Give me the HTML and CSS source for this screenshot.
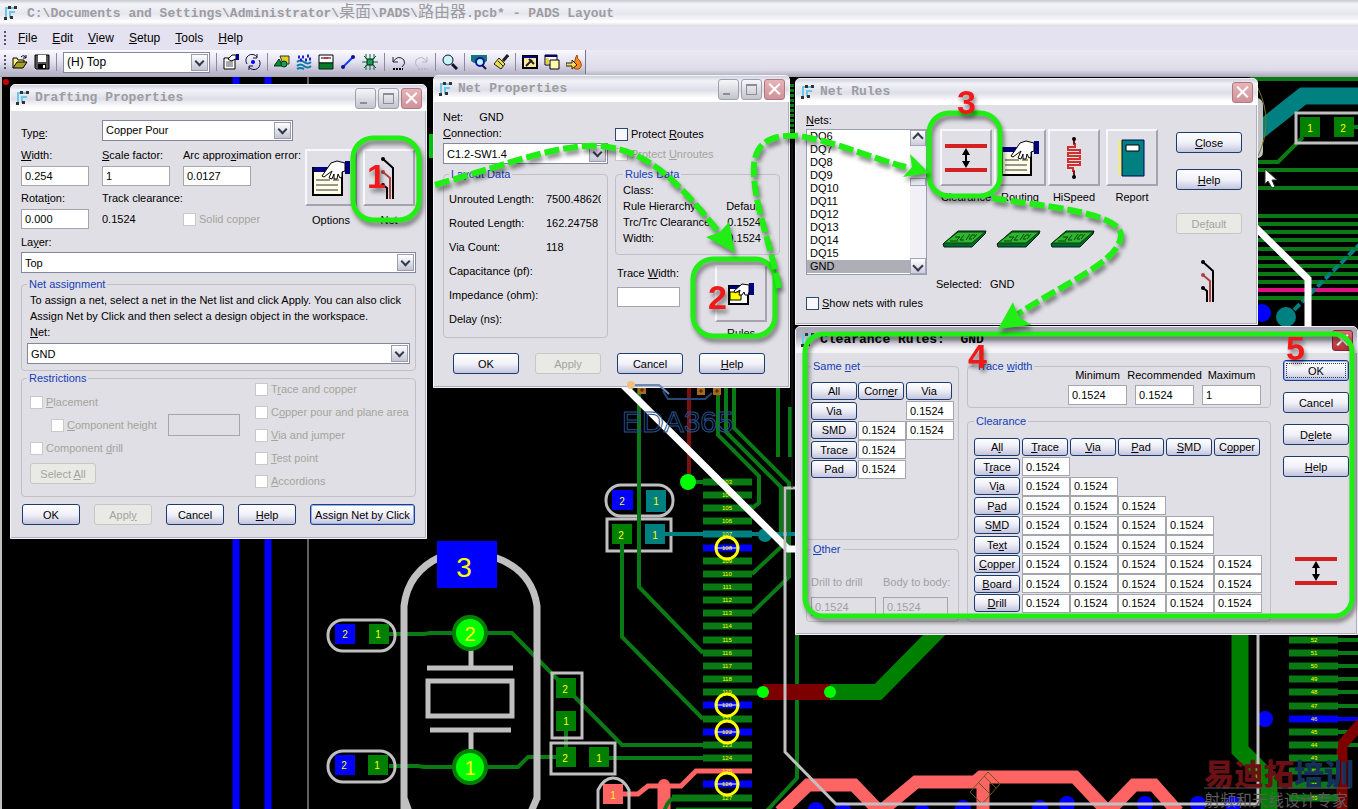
FILE: index.html
```html
<!DOCTYPE html>
<html lang="en">
<head>
  <meta charset="UTF-8">
  <title>PADS Layout</title>
  <link rel="stylesheet" href="styles.css">
</head>
<body>
<svg class="defs" aria-hidden="true">
  <defs>
    <symbol id="i-app" viewBox="0 0 16 16">
      <path d="M3 13V3h9M7 13V7h5" fill="none" stroke="#6cc6e8" stroke-width="2"/>
      <path d="M5 1h3v3H5zM11 1h3v3h-3zM1 12h3v3H1zM7 11h3v3H7z" fill="#333"/>
    </symbol>
    <symbol id="i-hand" viewBox="0 0 38 36">
      <path d="M1 8h29v27H1z" fill="#fffde8" stroke="#000" stroke-width="2"/>
      <path d="M2 7h14v5H2z" fill="#000080"/>
      <path d="M4 20h14M21 20h6M4 25h22M4 30h22" stroke="#333"/>
      <path d="M33 1h5v13h-5z" fill="#000080"/>
      <path d="M33 3l-8-2-6 2-9 13 2 1 8-6-3 7 3 1 2-5 0 5 3 0 1-5 2 4 2-1v-5l3-1z" fill="#fff" stroke="#000"/>
    </symbol>
    <symbol id="i-net" viewBox="0 0 16 42">
      <path d="M2 2l10 9v31" fill="none" stroke="#000" stroke-width="2"/>
      <path d="M2 15l7 6v21" fill="none" stroke="#b04040" stroke-width="2"/>
      <path d="M2 28l4 3v11" fill="none" stroke="#000" stroke-width="2"/>
      <circle cx="2" cy="2" r="2"/><circle cx="2" cy="15" r="2" fill="#b04040"/><circle cx="2" cy="28" r="2"/>
    </symbol>
    <symbol id="i-clear" viewBox="0 0 42 28">
      <path d="M0 2h42M0 26h42" stroke="#d42020" stroke-width="4"/>
      <path d="M21 8v12" stroke="#000" stroke-width="2"/>
      <path d="M21 4l-4 7h8zM21 24l-4-7h8z"/>
    </symbol>
    <symbol id="i-speed" viewBox="0 0 16 42">
      <path d="M8 2v5h1v3H2v3h12v3H2v3h12v3H2v3h12v3H2v3h5v3h1M8 33v7" fill="none" stroke="#d03030" stroke-width="2"/>
      <path d="M8 2v5M8 34v6" stroke="#000"/>
      <circle cx="8" cy="2" r="2"/><circle cx="8" cy="40" r="2"/>
    </symbol>
    <symbol id="i-book" viewBox="0 0 26 38">
      <path d="M3 1h22v36H3z" fill="#008080" stroke="#000060"/>
      <path d="M1 2v34" stroke="#ff0" stroke-width="2" stroke-dasharray="3 1"/>
      <path d="M7 6h13v6H7z" fill="#fff" stroke="#000"/>
    </symbol>
    <symbol id="i-board" viewBox="0 0 45 18">
      <path d="M1 14L16 1h28l-1 3-13 13H2z" fill="#063" stroke="#021"/>
      <path d="M2 13L16 2h27L30 13z" fill="#2fb52f" stroke="#064006"/>
      <path d="M13 7h5l-3 3M22 5l-4 5h4M28 4l-4 6M33 5h-3l-3 4h3M8 11h8M35 4l-4 5" fill="none" stroke="#064006"/>
    </symbol>
    <symbol id="i-rules" viewBox="0 0 26 22">
      <path d="M1 3h19v18H1z" fill="#fff" stroke="#000" stroke-width="2"/>
      <path d="M2 9h11v8H2z" fill="#ff0" stroke="#000"/>
      <path d="M2 3h8v3H2z" fill="#000080"/>
      <path d="M21 0h5v12h-5z" fill="#000080"/>
      <path d="M21 2l-7-1-8 7 1 2 5-3-1 5 3 0 2-3 1 3 3 0 1-3z" fill="#fff" stroke="#000"/>
    </symbol>
  </defs>
</svg>

<div class="app">
  <header class="app-title">
    <svg class="ico"><use href="#i-app"/></svg>
    <span>C:\Documents and Settings\Administrator\<span class="cjk">桌面</span>\PADS\<span class="cjk">路由器</span>.pcb* - PADS Layout</span>
  </header>

  <nav class="menubar">
    <span class="grip"></span>
    <a href="#"><u>F</u>ile</a>
    <a href="#"><u>E</u>dit</a>
    <a href="#"><u>V</u>iew</a>
    <a href="#"><u>S</u>etup</a>
    <a href="#"><u>T</u>ools</a>
    <a href="#"><u>H</u>elp</a>
  </nav>

  <div class="toolbar-row">
    <div class="toolbar">
      <span class="grip"></span>
      <button aria-label="Open"><svg class="ico" viewBox="0 0 16 16"><path d="M1 14V4h4l1 2h6v3" fill="#ffef80" stroke="#000"/><path d="M1 14l4-6h10l-4 6z" fill="#a8a020" stroke="#000"/><path d="M9 3q3-3 5 1m0-3v3h-3" fill="none" stroke="#000"/></svg></button>
      <button aria-label="Save"><svg class="ico" viewBox="0 0 16 16"><path d="M1 1h14v14H2l-1-1z" fill="#555" stroke="#000"/><path d="M4 1h8v7H4z" fill="#fff"/><path d="M4 10h8v5H4z"/><path d="M9 11h2v3H9z" fill="#fff"/></svg></button>
      <span class="sep"></span>
      <span class="combo combo-layer"><select aria-label="Active layer"><option>(H) Top</option></select></span>
      <span class="sep"></span>
      <button aria-label="Properties"><svg class="ico" viewBox="0 0 16 16"><path d="M1 4h11v11H1z" fill="#fff" stroke="#000"/><path d="M3 8h7M3 10h7M3 12h7" stroke="#555"/><path d="M5 5l4-4h4v4L8 7z" fill="#fff" stroke="#000"/><path d="M13 0h3v6h-3z" fill="#000080"/></svg></button>
      <button aria-label="Cycle"><svg class="ico" viewBox="0 0 16 16"><circle cx="8" cy="8" r="2" fill="#00f"/><path d="M2 10a6 6 0 0 1 10-7M14 6a6 6 0 0 1-10 7M12 0v4H8M4 16v-4h4" fill="none" stroke="#114"/></svg></button>
      <span class="sep"></span>
      <button aria-label="Drafting"><svg class="ico" viewBox="0 0 16 16"><path d="M6 2h9v8H9z" fill="#e0d020" stroke="#333"/><path d="M0 12l5-7 4 7z" fill="#0a8a2a" stroke="#032"/><circle cx="10" cy="10" r="3" fill="#17a050" stroke="#032"/></svg></button>
      <button aria-label="Design"><svg class="ico" viewBox="0 0 16 16"><path d="M1 8q3-3 7 0t7 0M1 12q3-3 7 0t7 0M1 15q3-2 7 0" fill="none" stroke="#0a7aa8" stroke-width="2"/><path d="M2 3h2M6 3h2M11 2h2M4 6h2M9 6h2M13 5h2" stroke="#22c" stroke-width="3"/></svg></button>
      <button aria-label="Dimensioning"><svg class="ico" viewBox="0 0 16 16"><path d="M1 1h14v8H1z" fill="#fff" stroke="#000"/><path d="M3 4h10" stroke="#000"/><path d="M6 3h4v2H6z" fill="#c33"/><path d="M1 9h14v6H1z" fill="#0a7a2a" stroke="#021"/></svg></button>
      <button aria-label="ECO"><svg class="ico" viewBox="0 0 16 16"><path d="M3 13L13 3" stroke="#1040ff" stroke-width="2"/><circle cx="3" cy="13" r="2" fill="#118"/><circle cx="13" cy="3" r="2" fill="#118"/></svg></button>
      <button aria-label="BGA"><svg class="ico" viewBox="0 0 16 16"><path d="M8 0v16M0 8h16M2 2l12 12M14 2L2 14M4 0v5M12 0v5M4 11v5M12 11v5" stroke="#063"/><path d="M5 5h6v6H5z" fill="#1a9a5a" stroke="#021"/></svg></button>
      <span class="sep"></span>
      <button aria-label="Undo"><svg class="ico" viewBox="0 0 16 16"><path d="M2 3v5h5M2 8q5-8 11-2 2 4-2 7" fill="none" stroke="#223"/><path d="M2 15h10" stroke="#000" stroke-width="2" stroke-dasharray="2 1"/></svg></button>
      <button aria-label="Redo" disabled><svg class="ico" viewBox="0 0 16 16"><path d="M14 3v5H9M14 8Q9 0 3 6q-2 4 2 7" fill="none" stroke="#b5b5bd"/><path d="M5 15h10" stroke="#b5b5bd" stroke-width="2" stroke-dasharray="2 1"/></svg></button>
      <span class="sep"></span>
      <button aria-label="Zoom"><svg class="ico" viewBox="0 0 16 16"><circle cx="6" cy="6" r="5" fill="#c8f4f4" stroke="#113"/><path d="M10 10l5 5" stroke="#113" stroke-width="3"/></svg></button>
      <span class="sep"></span>
      <button aria-label="View board"><svg class="ico" viewBox="0 0 16 16"><path d="M0 1h16v6l-3 2H3L0 7z" fill="#107878"/><circle cx="9" cy="8" r="4" fill="#bff" stroke="#11a" stroke-width="2"/><path d="M11 11l4 4" stroke="#114" stroke-width="2"/></svg></button>
      <button aria-label="Redraw"><svg class="ico" viewBox="0 0 16 16"><path d="M15 1l-5 6" stroke="#222" stroke-width="3"/><path d="M6 4l6 6-4 5-7-5z" fill="#e8dc50" stroke="#222"/><path d="M5 7l5 5" stroke="#222"/></svg></button>
      <span class="sep"></span>
      <button aria-label="Project explorer"><svg class="ico" viewBox="0 0 16 16"><path d="M1 2h14v12H1z" fill="#ffe9a0" stroke="#000" stroke-width="2"/><path d="M1 3h14" stroke="#000080" stroke-width="2"/><path d="M4 12l6-6M7 5l5 5" stroke="#222" stroke-width="2"/></svg></button>
      <button aria-label="Output window"><svg class="ico" viewBox="0 0 16 16"><path d="M1 1h12v10H1z" fill="#fff" stroke="#000"/><path d="M1 2h12" stroke="#000080" stroke-width="2"/><path d="M6 6h9v9H6z" fill="#fffbb0" stroke="#000"/><path d="M2 4h3v6H2z" fill="#e8d040"/></svg></button>
      <button aria-label="Router"><svg class="ico" viewBox="0 0 16 16"><path d="M9 15q-4-4 0-8 0-3 2-6 0 4 3 6 3 5-1 8z" fill="#f58a1e" stroke="#a40"/><path d="M0 9h6V6l5 5-5 4v-3H0z" fill="#ffd850" stroke="#222"/></svg></button>
    </div>
  </div>

  <main class="workspace">
    <svg class="board" viewBox="0 77 1358 732" width="1358" height="732" aria-hidden="true">
      <!-- left side -->
      <path class="blue" d="M236 77V809M268 77V809" stroke-width="7"/>
      <path class="silk" d="M308 77V809" stroke-width="1"/>
      <path class="silk" d="M1 77V809" stroke-width="2"/>
      <circle cx="6" cy="82" r="3" fill="#c00"/>
      <path d="M431 134v24" stroke="#00c010" stroke-width="4"/>

      <!-- crystal -->
      <path class="green" d="M389 634H424L430 633H512L622 745H703M389 766H418L424 767H518L528 757H556M566 725V750M609 758H703"/>
      <path class="silk" d="M404 809V800L404 606Q408 572 440 557M494 557Q532 570 537 606V800M404 798L409 812M537 798L531 812" stroke-width="7"/>
      <path d="M437 541h60v47h-60z" fill="#00f"/>
      <text class="pin-big" x="464" y="577">3</text>
      <path class="silk" d="M471 650V668M471 730V750M427 668H513M430 730H511" stroke-width="5"/>
      <path class="silk" d="M428 681H512V716H428z" stroke-width="5"/>
      <circle cx="470" cy="633" r="16" fill="#0f0" stroke="#008000" stroke-width="4"/>
      <circle cx="470" cy="767" r="16" fill="#0f0" stroke="#008000" stroke-width="4"/>
      <text class="pin-mid" x="470" y="641">2</text>
      <text class="pin-mid" x="470" y="775">1</text>

      <!-- capacitors and resistors -->
      <g class="silk" stroke-width="3">
        <rect x="328" y="620" width="67" height="31" rx="15"/>
        <rect x="328" y="751" width="67" height="31" rx="15"/>
        <rect x="552" y="673" width="30" height="65"/>
        <rect x="551" y="743" width="64" height="31"/>
        <rect x="606" y="485" width="67" height="31" rx="15"/>
        <rect x="607" y="519" width="64" height="32"/>
      </g>
      <path fill="#00f" d="M335 624h20v20h-20zM335 755h20v20h-20zM612 490h21v20h-21z"/>
      <path fill="#008000" d="M369 624h20v20h-20zM368 755h20v20h-20zM556 678h20v20h-20zM556 711h20v20h-20zM556 747h20v20h-20zM589 747h20v20h-20zM612 524h20v20h-20z"/>
      <path fill="#008080" d="M646 490h20v22h-20zM645 524h20v20h-20z"/>

      <!-- centre routing -->
      <path class="green" d="M639 380V587L703 653M622 544V637L703 719M718 380V435L759 476V503L752 508M726 380V432L781 487V547L752 574M734 380V428L789 483V577L752 613M688 482H703"/>
      <path class="green" d="M778 407V457M790 407V457" stroke-width="7"/>
      <path class="green" d="M778 380V410M797 620V778L764 814"/>
      <path d="M689 380V482" stroke="#7a1010" stroke-width="4"/>
      <circle cx="688" cy="482" r="8" fill="#0f0"/>
      <path d="M665 534H795" stroke="#008080" stroke-width="4"/>
      <circle cx="765" cy="535" r="7" fill="#008080"/>
      <path class="pad green" d="M703 482h49M703 495h49M703 508h49M703 521h49M703 561h49M703 574h49M703 587h49M703 600h49M703 613h49M703 626h49M703 640h49M703 653h49M703 666h49M703 679h49M703 692h60M703 719h49M703 745h49M703 758h49M672 798h80M676 811h76"/>
      <path class="pad blue" d="M703 548h49M703 705h49M703 732h49M703 784h49"/>
      <path class="pad" d="M703 534h49" stroke="#008080"/>
      <path d="M623 794H638L648 786H681L696 771H752" fill="none" stroke="#ff6464" stroke-width="5"/>
      <path d="M664 784V812" stroke="#ff6464" stroke-width="13"/>
      <circle cx="664" cy="785" r="6" fill="#ff6464"/>
      <path class="green" d="M664 812Q668 798 676 798"/>
      <path d="M603 784h20v20h-20z" fill="#ff6464"/>
      <path class="silk" d="M598 812V790Q604 778 613 778Q623 778 629 790V812" stroke-width="3"/>
      <g class="pin">
        <text x="727" y="484">103</text><text x="727" y="497">104</text><text x="727" y="510">105</text>
        <text x="727" y="523">106</text><text x="727" y="536">107</text><text x="727" y="550">108</text>
        <text x="727" y="563">109</text><text x="727" y="576">110</text><text x="727" y="589">111</text>
        <text x="727" y="602">112</text><text x="727" y="615">113</text><text x="727" y="628">114</text>
        <text x="727" y="642">115</text><text x="727" y="655">116</text><text x="727" y="668">117</text>
        <text x="727" y="681">118</text><text x="727" y="694">119</text><text x="727" y="707">120</text>
        <text x="727" y="721">121</text><text x="727" y="734">122</text><text x="727" y="747">123</text>
        <text x="727" y="760">124</text><text x="727" y="773">125</text><text x="727" y="786">126</text>
        <text x="727" y="800">127</text>
      </g>
      <g fill="none" stroke="#ff0" stroke-width="3">
        <circle cx="727" cy="548" r="11"/><circle cx="727" cy="705" r="11"/>
        <circle cx="727" cy="732" r="11"/><circle cx="727" cy="784" r="11"/>
      </g>
      <path d="M715 548h24M715 705h24M715 732h24M715 784h24" stroke="#fff" stroke-width="1"/>
      <path d="M622 384L788 549H800" fill="none" stroke="#fff" stroke-width="7"/>

      <!-- logo -->
      <path d="M663 391L668 399H705L712 393" fill="none" stroke="#284878" stroke-width="2"/>
      <path d="M638 386h8v8h-8zM697 387h8v8h-8zM713 387h8v8h-8z" fill="#a86a20"/>
      <path d="M640 390h4M699 391h4M715 391h4M642 388v4M701 389v4M717 389v4" stroke="#402000"/>
      <text class="logo" x="622" y="432">EDA365</text>

      <!-- bottom routing -->
      <path d="M763 692H830" stroke="#7d0000" stroke-width="16"/>
      <path d="M830 692H878L940 629" fill="none" stroke="#008000" stroke-width="16"/>
      <circle cx="763" cy="692" r="6" fill="#0f0"/><circle cx="830" cy="692" r="6" fill="#0f0"/>
      <path d="M780 812L808 785H854L880 812L916 782H975L981 777H1075L1108 812L1134 785H1154L1178 812M983 780V812" fill="none" stroke="#ff6464" stroke-width="13"/>
      <path d="M970 792l18-20 12 12-18 20zM978 782l12 12M984 776l12 12" fill="none" stroke="#6a5a10"/>
      <g fill="#00f">
        <circle cx="816" cy="810" r="8"/><circle cx="843" cy="810" r="8"/><circle cx="922" cy="812" r="8"/>
        <circle cx="963" cy="808" r="8"/><circle cx="1040" cy="808" r="8"/><circle cx="1067" cy="804" r="8"/>
        <circle cx="1145" cy="804" r="8"/><circle cx="1198" cy="804" r="8"/><circle cx="1233" cy="804" r="8"/>
        <circle cx="1265" cy="719" r="8"/><circle cx="1262" cy="313" r="9"/>
      </g>
      <path d="M1240 620V750L1269 779V812" fill="none" stroke="#008000" stroke-width="17"/>
      <path class="silk" d="M800 488H785V752L836 804H1258V620" stroke-width="3"/>
      <path class="green" d="M1330 640h28M1330 653h28M1330 666h28M1330 679h28M1330 692h28M1330 706h28M1330 732h28M1330 745h28"/>
      <path class="blue" d="M1330 719h28" stroke-width="4"/>
      <path d="M1362 722L1342 745V812" fill="none" stroke="#7d0000" stroke-width="11"/>
      <path class="pad green" d="M1289 640h49M1289 653h49M1289 666h49M1289 679h49M1289 692h49M1289 706h49M1289 732h49M1289 745h49M1289 758h49M1289 771h49M1289 785h49M1289 798h49"/>
      <path class="pad blue" d="M1289 719h49"/>
      <g class="pin">
        <text x="1314" y="642">52</text><text x="1314" y="655">51</text><text x="1314" y="668">50</text>
        <text x="1314" y="681">49</text><text x="1314" y="694">48</text><text x="1314" y="708">47</text>
        <text x="1314" y="721">46</text><text x="1314" y="734">45</text><text x="1314" y="747">44</text>
        <text x="1314" y="760">43</text><text x="1314" y="773">42</text><text x="1314" y="787">41</text>
        <text x="1314" y="800">40</text>
      </g>

      <!-- top right -->
      <path class="green" d="M1250 79H1358M1250 162H1278L1303 137M1250 170H1358M1250 188H1358M1250 216H1358M1250 224H1358M1250 232H1358M1250 240H1358M1250 249H1358M1250 258H1358M1250 266H1358M1250 274H1358M1250 282H1358M1250 298H1358M1350 127H1358"/>
      <path d="M1250 290H1358" stroke="#e01080" stroke-width="4"/>
      <path d="M1250 138L1303 96H1358" fill="none" stroke="#008080" stroke-width="17"/>
      <path d="M1256 98q7 0 7 8v46q0 6-7 6z" fill="#c0c0c0"/>
      <path d="M1258 88q16 34 0 68" fill="none" stroke="#777720"/>
      <path class="silk" d="M1362 113H1296V143H1362" stroke-width="3"/>
      <path fill="#008000" d="M1300 117h20v20h-20zM1334 117h20v20h-20z"/>
      <path d="M1362 242L1290 314" stroke="#008080" stroke-width="4" stroke-dasharray="8 3"/>
      <circle cx="1286" cy="317" r="10" fill="#008080"/>
      <path d="M1250 222L1308 279V330" fill="none" stroke="#fff" stroke-width="7"/>
      <path class="green" d="M792 84V134" stroke-width="6" stroke-dasharray="3 2"/>
      <path d="M792 134V488" stroke="#222"/>

      <g class="pin-small">
        <text x="345" y="638">2</text><text x="378" y="638">1</text>
        <text x="344" y="769">2</text><text x="377" y="769">1</text>
        <text x="565" y="693">2</text><text x="566" y="725">1</text>
        <text x="565" y="762">2</text><text x="599" y="762">1</text>
        <text x="622" y="505">2</text><text x="656" y="505">1</text>
        <text x="621" y="539">2</text><text x="655" y="539">1</text>
        <text x="613" y="799">1</text>
        <text x="1310" y="132">1</text><text x="1343" y="132">2</text>
      </g>

      <text class="mark" x="1204" y="785"><tspan fill="#6b1014">易迪拓</tspan><tspan fill="#16305c">培训</tspan></text>
      <path d="M1204 788H1350" stroke="#555"/>
      <text class="mark-sub" x="1204" y="806">射频和天线设计专家</text>
    </svg>
  </main>

  <section class="dialog dialog-draft">
    <div class="title">
      <svg class="ico"><use href="#i-app"/></svg><h2>Drafting Properties</h2>
      <button class="win min" aria-label="Minimize"></button>
      <button class="win max" aria-label="Maximize"></button>
      <button class="win close" aria-label="Close"></button>
    </div>
    <form class="body">
      <div class="draft-top">
        <div>
          <div class="type-row">
            <label for="d-type">Typ<u>e</u>:</label>
            <span class="combo"><select id="d-type"><option>Copper Pour</option></select></span>
          </div>
          <div class="fields">
            <div><label for="d-width"><u>W</u>idth:</label><input type="text" id="d-width" value="0.254"></div>
            <div><label for="d-scale"><u>S</u>cale factor:</label><input type="text" id="d-scale" value="1"></div>
            <div><label for="d-arc">Arc appro<u>x</u>imation error:</label><input type="text" id="d-arc" value="0.0127"></div>
            <div><label for="d-rot">Rotat<u>i</u>on:</label><input type="text" id="d-rot" value="0.000"></div>
            <div><span class="lbl">Track clearance:</span><span class="val">0.1524</span></div>
            <label class="check solid"><input type="checkbox" disabled>Solid copper</label>
          </div>
        </div>
        <div class="tools">
          <div class="tool"><button type="button" id="b-opt"><svg width="38" height="36"><use href="#i-hand"/></svg></button><label for="b-opt">Options</label></div>
          <div class="tool"><button type="button" id="b-net"><svg width="16" height="42"><use href="#i-net"/></svg></button><label for="b-net">Net</label></div>
        </div>
      </div>
      <label class="layer-label" for="d-layer">La<u>y</u>er:</label>
      <span class="combo"><select id="d-layer"><option>Top</option></select></span>

      <fieldset class="assign">
        <legend>Net assignment</legend>
        <p>To assign a net, select a net in the Net list and click Apply. You can also click<br>Assign Net by Click and then select a design object in the workspace.</p>
        <label for="d-net"><u>N</u>et:</label>
        <span class="combo"><select id="d-net"><option>GND</option></select></span>
      </fieldset>

      <fieldset class="restrict">
        <legend>Restrictions</legend>
        <div class="restrict-cols">
          <div class="restrict-left">
            <label class="check"><input type="checkbox" disabled><span><u>P</u>lacement</span></label>
            <div class="height-row">
              <label class="check"><input type="checkbox" disabled><span><u>C</u>omponent height</span></label>
              <input type="text" aria-label="Component height" disabled>
            </div>
            <label class="check"><input type="checkbox" disabled><span>Component <u>d</u>rill</span></label>
            <button type="button" class="btn select-all" disabled>Select <u>A</u>ll</button>
          </div>
          <div class="restrict-right">
            <label class="check"><input type="checkbox" disabled><span>T<u>r</u>ace and copper</span></label>
            <label class="check"><input type="checkbox" disabled><span>C<u>o</u>pper pour and plane area</span></label>
            <label class="check"><input type="checkbox" disabled><span><u>V</u>ia and jumper</span></label>
            <label class="check"><input type="checkbox" disabled><span><u>T</u>est point</span></label>
            <label class="check"><input type="checkbox" disabled><span><u>A</u>ccordions</span></label>
          </div>
        </div>
      </fieldset>

      <div class="actions">
        <button type="button" class="btn">OK</button>
        <button type="button" class="btn" disabled>Appl<u>y</u></button>
        <button type="button" class="btn">Cancel</button>
        <button type="button" class="btn"><u>H</u>elp</button>
        <button type="button" class="btn default wide">Assign Net by Click</button>
      </div>
    </form>
  </section>

  <section class="dialog dialog-net">
    <div class="title">
      <svg class="ico"><use href="#i-app"/></svg><h2>Net Properties</h2>
      <button class="win min" aria-label="Minimize"></button>
      <button class="win max" aria-label="Maximize"></button>
      <button class="win close" aria-label="Close"></button>
    </div>
    <form class="body">
      <div class="net-cols">
        <div>
          <div class="net-name"><span>Net:</span><span>GND</span></div>
          <label class="lbl" for="n-conn"><u>C</u>onnection:</label>
          <span class="combo"><select id="n-conn"><option>C1.2-SW1.4</option></select></span>
          <fieldset class="layout-data">
            <legend>Layout Data</legend>
            <dl>
              <dt>Unrouted Length:</dt><dd>7500.48620</dd>
              <dt>Routed Length:</dt><dd>162.24758</dd>
              <dt>Via Count:</dt><dd>118</dd>
              <dt>Capacitance (pf):</dt><dd></dd>
              <dt>Impedance (ohm):</dt><dd></dd>
              <dt>Delay (ns):</dt><dd></dd>
            </dl>
          </fieldset>
        </div>
        <div>
          <div class="protect">
            <label class="check"><input type="checkbox"><span>Protect <u>R</u>outes</span></label>
            <label class="check"><input type="checkbox" disabled><span>Protect <u>U</u>nroutes</span></label>
          </div>
          <fieldset class="rules-data">
            <legend>Rules Data</legend>
            <dl>
              <dt>Class:</dt><dd></dd>
              <dt>Rule Hierarchy:</dt><dd>Default</dd>
              <dt>Trc/Trc Clearance:</dt><dd>0.1524</dd>
              <dt>Width:</dt><dd>0.1524</dd>
            </dl>
          </fieldset>
          <div class="width-row">
            <div class="trace-field"><label class="lbl" for="n-tw">Trace <u>W</u>idth:</label><input type="text" id="n-tw"></div>
            <div class="tool"><button type="button" id="b-rules"><svg width="26" height="22"><use href="#i-rules"/></svg></button><label for="b-rules">Rules</label></div>
          </div>
        </div>
      </div>
      <div class="actions">
        <button type="button" class="btn">OK</button>
        <button type="button" class="btn" disabled>Apply</button>
        <button type="button" class="btn">Cancel</button>
        <button type="button" class="btn"><u>H</u>elp</button>
      </div>
    </form>
    <svg class="logo-peek" width="45" height="14" viewBox="0 0 45 14" aria-hidden="true">
      <path d="M5 4h28l10 9" fill="none" stroke="#7088b8" stroke-width="2"/>
      <circle cx="5" cy="4" r="4" fill="#f0c080"/>
    </svg>
  </section>

  <section class="dialog dialog-rules">
    <div class="title">
      <svg class="ico"><use href="#i-app"/></svg><h2>Net Rules</h2>
      <button class="win close" aria-label="Close"></button>
    </div>
    <form class="body">
      <div class="nets">
        <label class="lbl" for="r-nets"><u>N</u>ets:</label>
        <div class="listbox">
          <select id="r-nets" size="11">
            <option>DQ6</option><option>DQ7</option><option>DQ8</option><option>DQ9</option>
            <option>DQ10</option><option>DQ11</option><option>DQ12</option><option>DQ13</option>
            <option>DQ14</option><option>DQ15</option><option selected>GND</option>
          </select>
          <div class="scroll">
            <button type="button" class="up" aria-label="Scroll up"></button>
            <span class="thumb"></span>
            <button type="button" class="down" aria-label="Scroll down"></button>
          </div>
        </div>
        <label class="check"><input type="checkbox"><span><u>S</u>how nets with rules</span></label>
      </div>
      <div class="rules-mid">
        <div class="tools">
          <div class="tool"><button type="button" id="b-clr"><svg width="42" height="28"><use href="#i-clear"/></svg></button><label for="b-clr">Clearance</label></div>
          <div class="tool"><button type="button" id="b-rt"><svg width="38" height="36"><use href="#i-hand"/></svg></button><label for="b-rt">Routing</label></div>
          <div class="tool"><button type="button" id="b-hs"><svg width="16" height="42"><use href="#i-speed"/></svg></button><label for="b-hs">HiSpeed</label></div>
          <div class="tool apart"><button type="button" id="b-rep"><svg width="26" height="38"><use href="#i-book"/></svg></button><label for="b-rep">Report</label></div>
        </div>
        <div class="boards">
          <svg width="45" height="18"><use href="#i-board"/></svg>
          <svg width="45" height="18"><use href="#i-board"/></svg>
          <svg width="45" height="18"><use href="#i-board"/></svg>
        </div>
        <div class="selected"><span>Selected:</span><span>GND</span></div>
      </div>
      <div class="side">
        <button type="button" class="btn"><u>C</u>lose</button>
        <button type="button" class="btn"><u>H</u>elp</button>
        <button type="button" class="btn reset" disabled>De<u>f</u>ault</button>
        <svg width="16" height="42"><use href="#i-net"/></svg>
      </div>
    </form>
  </section>

  <section class="dialog dialog-clear">
    <div class="title active">
      <svg class="ico"><use href="#i-app"/></svg><h2>Clearance Rules:&nbsp; GND</h2>
      <button class="win close" aria-label="Close"></button>
    </div>
    <form class="body">
      <div>
        <fieldset class="same-net">
          <legend>Same <u>n</u>et</legend>
          <table class="matrix">
            <tr><th><button type="button">All</button></th><th><button type="button">Corn<u>e</u>r</button></th><th><button type="button">Via</button></th></tr>
            <tr><th><button type="button">Via</button></th><td></td><td><input aria-label="Via to via" value="0.1524"></td></tr>
            <tr><th><button type="button">SMD</button></th><td><input aria-label="SMD to corner" value="0.1524"></td><td><input aria-label="SMD to via" value="0.1524"></td></tr>
            <tr><th><button type="button">Trace</button></th><td><input aria-label="Trace to corner" value="0.1524"></td><td></td></tr>
            <tr><th><button type="button">Pad</button></th><td><input aria-label="Pad to corner" value="0.1524"></td><td></td></tr>
          </table>
        </fieldset>
        <fieldset class="other">
          <legend><u>O</u>ther</legend>
          <div class="other-row">
            <div><label class="lbl" for="o-drill">Drill to drill</label><input type="text" id="o-drill" value="0.1524" disabled></div>
            <div><label class="lbl" for="o-body">Body to body:</label><input type="text" id="o-body" value="0.1524" disabled></div>
          </div>
        </fieldset>
      </div>
      <div>
        <fieldset class="trace-width">
          <legend>Trace <u>w</u>idth</legend>
          <div class="width-fields">
            <div><label for="t-min">Minimum</label><input type="text" id="t-min" value="0.1524"></div>
            <div><label for="t-rec">Recommended</label><input type="text" id="t-rec" value="0.1524"></div>
            <div><label for="t-max">Maximum</label><input type="text" id="t-max" value="1"></div>
          </div>
        </fieldset>
        <fieldset class="clearance">
          <legend>Clearance</legend>
          <table class="matrix">
            <tr><th><button type="button">A<u>l</u>l</button></th><th><button type="button"><u>T</u>race</button></th><th><button type="button"><u>V</u>ia</button></th><th><button type="button"><u>P</u>ad</button></th><th><button type="button"><u>S</u>MD</button></th><th><button type="button">C<u>o</u>pper</button></th></tr>
            <tr><th><button type="button">T<u>r</u>ace</button></th><td><input aria-label="Trace to trace" value="0.1524"></td></tr>
            <tr><th><button type="button">V<u>i</u>a</button></th><td><input aria-label="Via to trace" value="0.1524"></td><td><input aria-label="Via to via" value="0.1524"></td></tr>
            <tr><th><button type="button">P<u>a</u>d</button></th><td><input aria-label="Pad to trace" value="0.1524"></td><td><input aria-label="Pad to via" value="0.1524"></td><td><input aria-label="Pad to pad" value="0.1524"></td></tr>
            <tr><th><button type="button">S<u>M</u>D</button></th><td><input aria-label="SMD to trace" value="0.1524"></td><td><input aria-label="SMD to via" value="0.1524"></td><td><input aria-label="SMD to pad" value="0.1524"></td><td><input aria-label="SMD to SMD" value="0.1524"></td></tr>
            <tr><th><button type="button">Te<u>x</u>t</button></th><td><input aria-label="Text to trace" value="0.1524"></td><td><input aria-label="Text to via" value="0.1524"></td><td><input aria-label="Text to pad" value="0.1524"></td><td><input aria-label="Text to SMD" value="0.1524"></td></tr>
            <tr><th><button type="button"><u>C</u>opper</button></th><td><input aria-label="Copper to trace" value="0.1524"></td><td><input aria-label="Copper to via" value="0.1524"></td><td><input aria-label="Copper to pad" value="0.1524"></td><td><input aria-label="Copper to SMD" value="0.1524"></td><td><input aria-label="Copper to copper" value="0.1524"></td></tr>
            <tr><th><button type="button"><u>B</u>oard</button></th><td><input aria-label="Board to trace" value="0.1524"></td><td><input aria-label="Board to via" value="0.1524"></td><td><input aria-label="Board to pad" value="0.1524"></td><td><input aria-label="Board to SMD" value="0.1524"></td><td><input aria-label="Board to copper" value="0.1524"></td></tr>
            <tr><th><button type="button"><u>D</u>rill</button></th><td><input aria-label="Drill to trace" value="0.1524"></td><td><input aria-label="Drill to via" value="0.1524"></td><td><input aria-label="Drill to pad" value="0.1524"></td><td><input aria-label="Drill to SMD" value="0.1524"></td><td><input aria-label="Drill to copper" value="0.1524"></td></tr>
          </table>
        </fieldset>
      </div>
      <div class="side">
        <button type="button" class="btn default focus">OK</button>
        <button type="button" class="btn">Cancel</button>
        <button type="button" class="btn">D<u>e</u>lete</button>
        <button type="button" class="btn"><u>H</u>elp</button>
        <svg width="42" height="28"><use href="#i-clear"/></svg>
      </div>
    </form>
  </section>

  <!-- numbered steps drawn over the windows -->
  <svg class="notes" viewBox="0 0 1358 809" width="1358" height="809">
    <g class="ring">
      <rect x="353" y="138" width="66" height="82" rx="20"/>
      <rect x="693" y="259" width="82" height="77" rx="20"/>
      <rect x="929" y="113" width="71" height="83" rx="20"/>
      <rect x="805" y="334" width="547" height="282" rx="18"/>
    </g>
    <g class="path">
      <path d="M435 185C520 160 560 144 600 146C650 150 680 185 718 231"/>
      <path d="M779 288C770 240 752 200 754 165C756 140 775 134 800 136C840 143 870 158 906 167"/>
      <path d="M992 198C1040 206 1122 212 1121 236C1118 262 1070 280 1018 314"/>
    </g>
    <g class="head">
      <path d="M735 253L729 222L720 232L706 237z"/>
      <path d="M929 173L910 154L912 167L903 177z"/>
      <path d="M998 329L1031 325L1018 316L1013 302z"/>
    </g>
    <g class="step">
      <text x="367" y="188">1</text>
      <text x="708" y="309">2</text>
      <text x="957" y="114">3</text>
      <text x="968" y="368">4</text>
      <text x="1286" y="360">5</text>
    </g>
    <path d="M1265 169v15l3-3 4 7 3-1-3-7h5z" fill="#fff" stroke="#333"/>
  </svg>
</div>
</body>
</html>
```
FILE: styles.css
```css
* {
  box-sizing: border-box;
}

body {
  margin: 0;
  font-family: "Liberation Sans", "Noto Sans CJK SC", Arial, sans-serif;
  font-size: 11px;
  line-height: 16px;
  color: #000;
  background-color: #000;
}

button, input, select {
  font: inherit;
  color: inherit;
  margin: 0;
}

.defs {
  position: absolute;
  width: 0;
  height: 0;
}

.ico {
  width: 16px;
  height: 16px;
  flex: none;
  display: block;
}

.app {
  position: relative;
  display: flex;
  flex-direction: column;
  min-height: 100vh;
  overflow: hidden;
}

/* main window */
.app-title {
  display: flex;
  align-items: center;
  gap: 8px;
  height: 26px;
  padding-left: 3px;
  background: linear-gradient(#c8c8d4, #f4f4f8 4px, #e6e6ee 14px, #fff 22px, #dcdce6);
  font-family: "Liberation Mono", "Noto Sans CJK SC", monospace;
  font-size: 13px;
  font-weight: bold;
  color: #9c9ca2;
  white-space: nowrap;
}

.cjk {
  font-size: 16px;
  font-weight: normal;
}

.menubar {
  display: flex;
  align-items: center;
  gap: 15px;
  height: 24px;
  padding-left: 4px;
  background-color: #e4e2f0;
  font-size: 12px;
}

.menubar a {
  color: #000;
  text-decoration: none;
}

.grip {
  width: 2px;
  height: 14px;
  background: repeating-linear-gradient(#55556a 0 2px, transparent 2px 4px);
}

.menubar .grip {
  margin-right: -3px;
}

.toolbar-row {
  height: 27px;
  background: linear-gradient(#eceaf4, #dddbe8 20px, #a8a6b8);
}

.toolbar {
  display: flex;
  align-items: center;
  gap: 6px;
  width: max-content;
  height: 24px;
  padding: 0 3px 0 4px;
  border-right: 1px solid #77758a;
  background: linear-gradient(#fafaff, #e4e2f0 12px, #b4b2c6);
}

.toolbar button {
  padding: 0;
  border: 0;
  background: none;
}

.sep {
  width: 1px;
  height: 18px;
  background-color: #8c8a9e;
}

.workspace {
  flex: 1;
  background-color: #000;
  overflow: hidden;
}

/* combo boxes */
.combo {
  position: relative;
  display: block;
  height: 21px;
}

.combo select {
  width: 100%;
  height: 100%;
  padding: 0 20px 0 3px;
  border: 1px solid #84869a;
  border-radius: 0;
  background-color: #fff;
  appearance: none;
}

.combo::before {
  content: "";
  position: absolute;
  top: 2px;
  right: 2px;
  bottom: 2px;
  width: 15px;
  border: 1px solid #9a9cb0;
  background: linear-gradient(#fff, #c4c4d4);
  pointer-events: none;
}

.combo::after {
  content: "";
  position: absolute;
  top: 6px;
  right: 7px;
  width: 5px;
  height: 5px;
  border: solid #333a4e;
  border-width: 0 2px 2px 0;
  transform: rotate(45deg);
  pointer-events: none;
}

.combo-layer {
  width: 147px;
  font-size: 12px;
}

/* dialogs */
.dialog {
  position: absolute;
  border: 1px solid #f4f4fa;
  border-radius: 5px 5px 0 0;
  background-color: #e0dfe5;
  box-shadow: inset -1px -1px #b0b0bc;
}

.dialog-draft {
  left: 10px;
  top: 84px;
  width: 417px;
}

.dialog-net {
  left: 433px;
  top: 75px;
  width: 357px;
}

.dialog-rules {
  left: 795px;
  top: 78px;
  width: 463px;
}

.dialog-clear {
  left: 795px;
  top: 326px;
  width: 563px;
}

.title {
  display: flex;
  align-items: center;
  gap: 2px;
  height: 26px;
  padding: 0 4px;
  border-radius: 4px 4px 0 0;
  background: linear-gradient(#d0d0dc, #f2f2f8 5px, #dedee8 14px, #fff 22px);
}

.title.active {
  background: linear-gradient(#a8a8b8, #b4b4c0 10px, #f4f4f8 22px);
}

.title h2 {
  flex: 1;
  margin: 0 0 0 2px;
  font-family: "Liberation Mono", monospace;
  font-size: 13px;
  font-weight: bold;
  color: #9c9ca2;
}

.title.active h2 {
  color: #000;
}

.win {
  position: relative;
  width: 21px;
  height: 21px;
  padding: 0;
  border: 1px solid #a0a0ac;
  border-radius: 3px;
  background: linear-gradient(#f6f6fa, #c4c4ce);
}

.win.min::after {
  content: "";
  position: absolute;
  left: 4px;
  bottom: 4px;
  width: 7px;
  height: 2px;
  background-color: #8c8c98;
}

.win.max::after {
  content: "";
  position: absolute;
  inset: 4px;
  border: 1px solid #8c8c98;
  border-top-width: 2px;
}

.win.close {
  border-color: #b07880;
  background: linear-gradient(#e6b4b8, #cf9298);
}

.active .win.close {
  border-color: #802830;
  background: linear-gradient(#d87078, #b83038);
}

.win.close::before,
.win.close::after {
  content: "";
  position: absolute;
  left: 2px;
  top: 8px;
  width: 15px;
  height: 2px;
  background-color: #fff;
  transform: rotate(45deg);
}

.win.close::after {
  transform: rotate(-45deg);
}

.body {
  margin: 0;
  white-space: nowrap;
}

/* form parts */
label, .lbl, .val {
  display: block;
}

input:not([type="checkbox"]) {
  display: block;
  width: 100%;
  height: 20px;
  padding: 0 3px;
  border: 1px solid #a5a5b0;
  border-radius: 0;
  background-color: #fff;
}

input:disabled:not([type="checkbox"]) {
  background-color: #e0dfe5;
  color: #a0a0a4;
}

.check {
  display: flex;
  align-items: center;
  gap: 3px;
  height: 12px;
}

.check input {
  appearance: none;
  flex: none;
  width: 13px;
  height: 13px;
  border: 1px solid #2a4a74;
  background-color: #f8f8fa;
}

.check input:disabled {
  border-color: #cacac4;
  background-color: #fff;
}

.check:has(input:disabled) {
  color: #a5a49c;
}

fieldset {
  min-width: 0;
  margin: 0;
  border: 1px solid #c0c0ca;
  border-radius: 4px;
}

legend {
  height: 14px;
  padding: 0 2px;
  line-height: 14px;
  color: #1440b8;
}

.btn {
  width: 66px;
  height: 21px;
  padding: 0;
  border: 1px solid #1c3c70;
  border-radius: 3px;
  background: linear-gradient(#fff, #f0f0f8 10px, #c4c4dc);
}

.btn.default {
  border-color: #1c3c90;
  box-shadow: inset 0 0 0 1px #98b0e8;
}

.btn.focus {
  outline: 1px dotted #335;
  outline-offset: -4px;
}

.btn:disabled {
  border-color: #c8c8c0;
  background: #e9e9e6;
  color: #a5a49c;
}

.actions {
  display: flex;
}

.tools {
  display: flex;
}

.tool {
  width: 52px;
  text-align: center;
}

.tool button {
  display: flex;
  align-items: center;
  justify-content: center;
  width: 52px;
  height: 57px;
  margin-bottom: 3px;
  padding: 0;
  border: 2px solid;
  border-color: #f8f8fc #a4a4b0 #a4a4b0 #f8f8fc;
  background-color: #e0dfe5;
}

.side {
  display: flex;
  flex-direction: column;
  align-items: center;
}

/* drafting properties */
.dialog-draft .body {
  padding: 8px 10px 13px;
}

.draft-top {
  display: grid;
  grid-template-columns: 1fr 111px;
}

.type-row {
  display: flex;
  align-items: center;
}

.type-row label {
  width: 81px;
  padding-top: 6px;
}

.type-row .combo {
  width: 191px;
}

.fields {
  display: grid;
  grid-template-columns: repeat(3, 68px);
  gap: 4px 13px;
  margin-top: 6px;
}

.fields input:not([type="checkbox"]) {
  margin-top: 3px;
}

.fields .val {
  margin-top: 5px;
}

.solid {
  align-self: end;
  height: 20px;
}

.draft-top .tools {
  gap: 6px;
  margin-top: 30px;
}

.draft-top .tool button {
  margin-bottom: 6px;
}

.layer-label {
  margin: 5px 0 2px;
}

.assign {
  margin-top: 4px;
  padding: 1px 5px 6px;
}

.assign p {
  margin: 0 3px;
}

.assign label {
  margin: 0 3px 3px;
}

.restrict {
  padding: 0 5px 9px;
}

.restrict-cols {
  display: flex;
}

.restrict-left {
  display: flex;
  flex-direction: column;
  gap: 6px;
  width: 225px;
  padding: 11px 0 0 3px;
}

.height-row {
  display: flex;
  align-items: center;
  justify-content: space-between;
  padding: 0 12px 0 21px;
}

.height-row input:not([type="checkbox"]) {
  width: 72px;
  height: 22px;
}

.select-all {
  margin-top: 3px;
}

.restrict-right {
  display: flex;
  flex-direction: column;
  gap: 11px;
  margin-top: -2px;
  padding-left: 3px;
}

.dialog-draft .actions {
  gap: 14px;
  margin: 7px 0 0 1px;
}

.dialog-draft .actions .btn {
  width: 58px;
}

.dialog-draft .actions .wide {
  width: 105px;
}

/* net properties */
.dialog-net .body {
  padding: 7px 9px 13px;
}

.net-cols {
  display: grid;
  grid-template-columns: 1fr 1fr;
  gap: 7px;
}

.net-name {
  display: flex;
  gap: 16px;
}

.net-cols .combo {
  margin-top: 2px;
}

dl {
  display: grid;
  margin: 0;
}

dd {
  margin: 0;
}

.layout-data {
  margin-top: 3px;
  padding: 6px 6px 6px 5px;
}

.layout-data dl {
  grid-template-columns: 97px 1fr;
  line-height: 24px;
}

.layout-data dd {
  overflow: hidden;
}

.protect {
  display: flex;
  flex-direction: column;
  gap: 8px;
  padding: 19px 0 7px;
}

.rules-data {
  padding: 1px 18px 8px 7px;
}

.rules-data dl {
  grid-template-columns: auto auto;
  grid-auto-rows: 16px;
}

.rules-data dd {
  text-align: right;
}

.width-row {
  display: flex;
  justify-content: space-between;
  padding: 10px 13px 0 2px;
}

.trace-field {
  width: 63px;
}

.trace-field input:not([type="checkbox"]) {
  margin-top: 6px;
}

.dialog-net .actions {
  gap: 16px;
  margin: 12px 0 0 10px;
}

/* end of the board logo, drawn on top of the window edge */
.logo-peek {
  position: absolute;
  left: 192px;
  bottom: -8px;
}

/* net rules */
.dialog-rules .body {
  display: flex;
  padding: 7px 15px 15px 10px;
}

.nets {
  width: 121px;
}

.listbox {
  display: flex;
  height: 146px;
  margin: 1px 0 22px;
  border: 1px solid #9a9cb0;
  background-color: #fff;
}

.listbox select {
  flex: 1;
  min-width: 0;
  height: 144px;
  padding: 0;
  border: 0;
  outline: 0;
  background-color: #fff;
  overflow: hidden;
  scrollbar-width: none;
}

.listbox option {
  height: 13px;
  min-height: 13px;
  padding: 0 3px;
  line-height: 13px;
}

.listbox option:checked {
  background: #aeaeb6 linear-gradient(#aeaeb6, #aeaeb6);
  color: #000;
}

.scroll {
  display: flex;
  flex-direction: column;
  justify-content: space-between;
  width: 16px;
  background-color: #f0f0f6;
}

.scroll button {
  display: flex;
  align-items: center;
  justify-content: center;
  height: 16px;
  padding: 0;
  border: 1px solid #a4a6ba;
  background: linear-gradient(#fff, #ccccda);
}

.scroll button::after {
  content: "";
  width: 6px;
  height: 6px;
  border: solid #333a4e;
  border-width: 2px 0 0 2px;
  transform: rotate(45deg);
}

.scroll .down::after {
  transform: rotate(225deg);
}

.scroll .thumb {
  height: 8px;
  margin-top: -40px;
  border: 1px solid #a4a6ba;
  background-color: #e6e6f0;
}

.rules-mid {
  margin-left: 9px;
  padding-top: 17px;
}

.rules-mid .tools {
  gap: 2px;
  padding-left: 4px;
}

.apart {
  margin-left: 4px;
}

.boards {
  display: flex;
  gap: 9px;
  margin: 25px 0 28px;
  padding-left: 6px;
}

.selected {
  display: flex;
  gap: 8px;
}

.dialog-rules .side {
  gap: 16px;
  margin-left: auto;
  padding-top: 20px;
}

.dialog-rules .reset {
  margin: 7px 0 10px;
}

/* clearance rules */
.dialog-clear .body {
  display: grid;
  grid-template-columns: 153px 1fr 66px;
  column-gap: 8px;
  padding: 6px 8px 12px 10px;
}

.dialog-clear .side {
  gap: 11px;
  padding-top: 1px;
}

.dialog-clear .side svg {
  margin-top: 69px;
}

.same-net {
  padding: 8px 4px 60px;
}

.other {
  margin-top: 2px;
  padding: 18px 4px 5px;
}

.other-row {
  display: flex;
  gap: 7px;
  color: #a0a0a4;
}

.other-row input:not([type="checkbox"]) {
  width: 65px;
  height: 19px;
  margin-top: 7px;
}

.trace-width {
  margin-right: 4px;
  padding: 0 9px 2px 6px;
}

.width-fields {
  display: flex;
  justify-content: flex-end;
  gap: 8px;
  margin-top: -6px;
}

.width-fields label {
  display: flex;
  justify-content: center;
  width: 59px;
  margin-bottom: 2px;
}

.width-fields input:not([type="checkbox"]) {
  width: 59px;
}

.clearance {
  margin: 6px 4px 0 0;
  padding: 9px 6px 8px;
}

.matrix {
  border-collapse: collapse;
  table-layout: fixed;
}

.matrix th,
.matrix td {
  width: 48px;
  height: 19px;
  padding: 0;
  font-weight: normal;
}

.matrix tr:nth-child(odd) th,
.matrix tr:nth-child(odd) td {
  height: 20px;
}

.matrix button {
  display: block;
  width: 46px;
  height: 18px;
  padding: 0;
  border: 1px solid #1c3c70;
  border-radius: 3px;
  background: linear-gradient(#fff, #ececf6 8px, #c4c4dc);
  line-height: 14px;
}

.matrix input:not([type="checkbox"]) {
  width: 48px;
  height: 19px;
}

/* board drawing */
.board,
.notes {
  display: block;
}

.board path.green {
  fill: none;
  stroke: #0a7a14;
  stroke-width: 4;
}

.board path.blue {
  stroke: #00f;
}

.board path.pad {
  stroke-width: 7;
}

.silk {
  fill: none;
  stroke: #c0c0c0;
}

.pin,
.pin-small,
.pin-mid,
.pin-big {
  fill: #ff0;
  text-anchor: middle;
}

.pin {
  font-size: 6px;
}

.pin-small {
  font-size: 10px;
}

.pin-mid {
  font-size: 20px;
}

.pin-big {
  font-size: 28px;
}

.logo {
  font-size: 30px;
  fill: none;
  stroke: #28508c;
}

.mark {
  font-size: 30px;
  font-weight: 900;
}

.mark-sub {
  font-size: 16px;
  fill: #5c5c5c;
}

/* step marks */
.notes {
  position: absolute;
  top: 0;
  left: 0;
  pointer-events: none;
}

.ring,
.path {
  fill: none;
  stroke: #20ee14;
  stroke-width: 5;
}

.path {
  stroke-width: 6;
  stroke-dasharray: 15 4;
}

.head {
  fill: #20ee14;
}

.ring,
.path,
.head,
.step {
  filter: drop-shadow(2px 4px 2px rgba(0, 0, 0, 0.45));
}

.step {
  font-size: 34px;
  font-weight: bold;
  fill: #f01818;
}
```
